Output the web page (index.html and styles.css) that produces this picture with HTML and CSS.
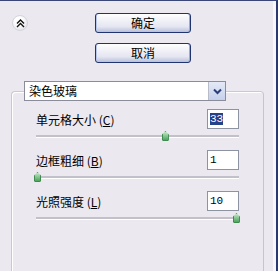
FILE: index.html
```html
<!DOCTYPE html>
<html>
<head>
    <meta charset="utf-8">
    <title>染色玻璃</title>
    <link rel="stylesheet" href="styles.css">
</head>
<body>
    <div class="panel">
        <div class="top">
            <button class="collapse">
                <svg width="9" height="9" viewBox="0 0 9 9"><path d="M1 4.5 L4.5 1 L8 4.5 M1 8 L4.5 4.5 L8 8" fill="none" stroke="#111" stroke-width="1.4"/></svg>
            </button>
            <div class="actions">
                <button class="btn">确定</button>
                <button class="btn">取消</button>
            </div>
        </div>

        <div class="group">
            <div class="combo">
                <span class="combo-text">染色玻璃</span>
                <span class="drop">
                    <svg width="9" height="7" viewBox="0 0 9 7"><path d="M1 1.5 L4.5 5 L8 1.5" fill="none" stroke="#2a3f7a" stroke-width="2"/></svg>
                </span>
            </div>

            <div class="field">
                <div class="row">
                    <label>单元格大小 (<u>C</u>)</label>
                    <span class="num"><span class="sel">33</span></span>
                </div>
                <div class="slider">
                    <div class="track"></div>
                    <span class="thumb" style="left:64%"></span>
                </div>
            </div>

            <div class="field">
                <div class="row">
                    <label>边框粗细 (<u>B</u>)</label>
                    <span class="num">1</span>
                </div>
                <div class="slider">
                    <div class="track"></div>
                    <span class="thumb" style="left:1%"></span>
                </div>
            </div>

            <div class="field">
                <div class="row">
                    <label>光照强度 (<u>L</u>)</label>
                    <span class="num">10</span>
                </div>
                <div class="slider">
                    <div class="track"></div>
                    <span class="thumb" style="left:99%"></span>
                </div>
            </div>
        </div>
    </div>
</body>
</html>
```

FILE: styles.css
```css
body {
	margin: 0;
	font-family: "Noto Sans CJK SC", "Liberation Sans", sans-serif;
	font-size: 12px;
	background: #ebe9ef;
}

.panel {
	width: 276px;
	height: 270px;
	border-top: 1px solid #3a4678;
	border-right: 2px solid #2c3870;
	box-shadow: inset -3px 0 0 #f7f6fa;
	overflow: hidden;
}

.top {
	display: flex;
	align-items: flex-start;
	padding-top: 12px;
}

.collapse {
	width: 16px;
	height: 16px;
	margin: 2px 0 0 12px;
	padding: 0;
	border: 1px solid #d6d4dc;
	border-radius: 50%;
	background: radial-gradient(circle at 40% 35%, #fff 30%, #e4e3ea 80%, #c9c8d0);
	display: flex;
	align-items: center;
	justify-content: center;
}

.actions {
	display: flex;
	flex-direction: column;
	gap: 10px;
	margin-left: 67px;
}

.btn {
	width: 96px;
	height: 20px;
	padding: 0;
	font: inherit;
	color: #000;
	border: 1px solid #1f3470;
	border-radius: 3px;
	background: linear-gradient(#ffffff, #f3f3f8 30%, #e4e6f1 70%, #b9c0d9);
	box-shadow: inset 1px 0 0 #b7c6ea, inset -1px 0 0 #9aaad5;
	line-height: 18px;
}

.group {
	margin: 28px 0 0 11px;
	width: 253px;
	height: 200px;
	border: 1px solid #cbc9d0;
	border-right-color: #c7c5cc;
	border-bottom: none;
	border-radius: 4px 4px 0 0;
	box-shadow: inset 1px 1px 0 #fff;
	padding-left: 24px;
	box-sizing: border-box;
}

.combo {
	display: flex;
	align-items: center;
	width: 202px;
	height: 20px;
	margin: -11px 0 0 -12px;
	box-sizing: border-box;
	border: 1px solid #8a8d99;
	background: #fff;
}

.combo-text {
	flex: 1;
	padding-left: 4px;
	line-height: 18px;
}

.drop {
	width: 16px;
	height: 18px;
	border-left: 1px solid #b8bcc8;
	background: linear-gradient(#e4e9f7, #c6d0ec);
	display: flex;
	align-items: center;
	justify-content: center;
}

.field {
	width: 203px;
	margin-top: 8px;
}

.field + .field {
	margin-top: 7px;
}

.row {
	display: flex;
	align-items: center;
	justify-content: space-between;
	height: 20px;
}

.num {
	width: 32px;
	height: 20px;
	box-sizing: border-box;
	border: 1px solid #8e93a3;
	background: #fff;
	font-family: "Liberation Mono", monospace;
	font-size: 11px;
	line-height: 18px;
	padding-left: 2px;
}

.sel {
	background: #24418a;
	color: #fff;
}

.slider {
	position: relative;
	height: 14px;
	display: flex;
	align-items: center;
}

.track {
	width: 100%;
	height: 2px;
	background: #c2c0c8;
	border-bottom: 1px solid #fff;
}

.thumb {
	position: absolute;
	top: 2px;
	width: 7px;
	height: 10px;
	margin-left: -4px;
	background: linear-gradient(#bfe6c4, #4fa35f);
	border: 1px solid #3e8c4d;
	box-sizing: border-box;
	clip-path: polygon(50% 0, 100% 35%, 100% 100%, 0 100%, 0 35%);
	border-radius: 1px;
}
```
